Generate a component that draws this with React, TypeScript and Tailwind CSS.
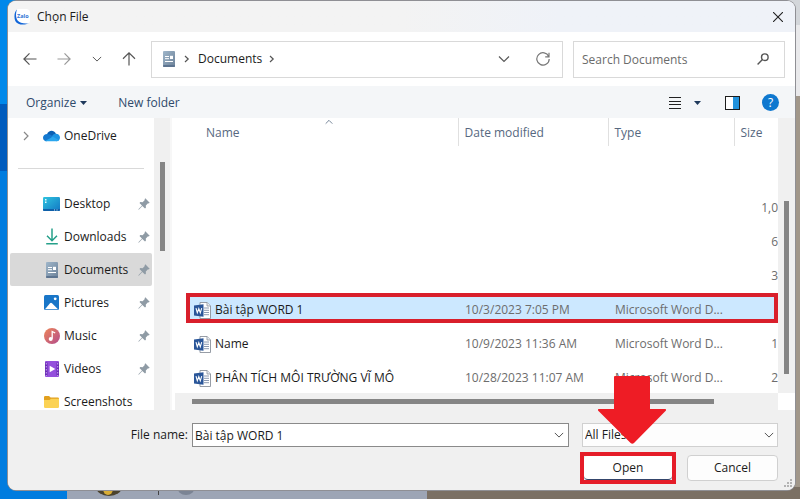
import React, { useState } from "react";

type IconProps = { className?: string };

const Chevron = ({ className = "" }: IconProps) => (
  <svg viewBox="0 0 12 12" className={className} fill="none" stroke="currentColor" strokeWidth="1.2" aria-hidden="true">
    <path d="M1 3.500 6 8.500 11 3.500" />
  </svg>
);

const CrumbArrow = () => (
  <svg viewBox="0 0 6 8" className="h-2 w-1.5" fill="none" stroke="#555" strokeWidth="1.2" aria-hidden="true">
    <path d="M1 1l3.2 3L1 7" />
  </svg>
);

const ZaloIcon = () => (
  <svg viewBox="0 0 16 16" className="size-4" aria-hidden="true">
    <rect x="1" y="0" width="15" height="15" rx="4" fill="#fff" />
    <path d="M3 .6C.4 2.5-.4 8.400 1.400 12.200 3.400 15.800 10 16.600 15 14.200 10 14.800 5.600 14 3.600 11.500 1.600 8.600 1.600 4 3 .6Z" fill="#1266d8" />
    <text x="8.800" y="9" fontSize="5.500" fontWeight="700" textAnchor="middle" fill="#2f74d6" fontFamily="Open Sans, sans-serif">Zalo</text>
  </svg>
);

const DocumentIcon = ({ className = "h-4 w-3" }: IconProps) => (
  <svg viewBox="0 0 12 16" className={className} aria-hidden="true">
    <defs>
      <linearGradient id="docFill" x1="0" y1="0" x2="1" y2="1">
        <stop offset="0" stopColor="#9fb6ca" />
        <stop offset="1" stopColor="#6c8198" />
      </linearGradient>
    </defs>
    <rect width="12" height="16" rx="1" fill="url(#docFill)" />
    <rect y="14" width="12" height="2" rx="1" fill="#5d7490" />
    <path d="M2 5.500h4M2 7.700h4M2 10.500h8" stroke="#fff" strokeWidth="1" />
    <rect x="7" y="4.800" width="3" height="3.200" fill="#fff" />
  </svg>
);

const OneDriveIcon = () => (
  <svg viewBox="0 0 17 12" className="h-3 w-[17px]" aria-hidden="true">
    <path d="M4 4.200C5 1.200 8.500-.2 11 1.500c1 .6 1.500 1.400 1.900 2.300L9 7Z" fill="#0a5fb4" />
    <path d="M4.500 3.900C2 3.800 0 5.400 0 7.700 0 9.900 1.700 11.300 3.500 11.300L11.500 7.200 7 4.600C6.200 4.100 5.400 3.900 4.500 3.900Z" fill="#1479d0" />
    <path d="M12.700 3.700C15 3.500 17 5.300 17 7.500 17 9.700 15.500 11.300 13.500 11.300L8 7.800 10 4.700C10.800 4 11.700 3.700 12.700 3.700Z" fill="#1c93e3" />
    <path d="M3.500 11.300h10c1 0 1.800-.3 2.500-1L10 6.800 2 10.900c.4.300 1 .4 1.500.4Z" fill="#2aa6ee" />
  </svg>
);

const DesktopIcon = () => (
  <svg viewBox="0 0 17 14" className="h-3.5 w-[17px]" aria-hidden="true">
    <defs>
      <linearGradient id="deskFill" x1="0" y1="0" x2="1" y2="1">
        <stop offset="0" stopColor="#2fc4df" />
        <stop offset="1" stopColor="#1277c4" />
      </linearGradient>
    </defs>
    <rect width="17" height="14" rx="1.300" fill="url(#deskFill)" />
    <path d="M0 12h17v.7A1.300 1.300 0 0 1 15.700 14H1.300A1.300 1.300 0 0 1 0 12.700Z" fill="#0f5fa8" />
    <path d="M2 2h1.500v1.500H2zM2 4.500h1.500V6H2z" fill="#e5fbff" />
    <path d="M11 12.500h1v1h-1zM13.500 12.500h1v1h-1z" fill="#cfeeff" />
  </svg>
);

const DownloadIcon = () => (
  <svg viewBox="0 0 14 17" className="h-[17px] w-3.5" fill="none" stroke="#26a08a" strokeWidth="1.500" aria-hidden="true">
    <path d="M7 .5v12M2 7.800l5 5 5-5M1.200 15.700h11.600" />
  </svg>
);

const PictureIcon = () => (
  <svg viewBox="0 0 15 15" className="size-[15px]" aria-hidden="true">
    <rect width="15" height="15" rx="1.500" fill="#1976c8" />
    <path d="M1 14.300 6 8.200q1-1 2 0l6 6.100Z" fill="#fff" />
    <circle cx="11.200" cy="3.800" r="1.400" fill="#fff" />
  </svg>
);

const MusicIcon = () => (
  <svg viewBox="0 0 16 16" className="size-4" aria-hidden="true">
    <defs>
      <linearGradient id="musicFill" x1="0" y1="0" x2="1" y2="1">
        <stop offset="0" stopColor="#ee8658" />
        <stop offset="1" stopColor="#b34c8c" />
      </linearGradient>
    </defs>
    <circle cx="8" cy="8" r="8" fill="url(#musicFill)" />
    <path d="M8.200 10.800V3.500l3 1.500" fill="none" stroke="#fff" strokeWidth="1.300" />
    <circle cx="6.700" cy="10.900" r="2" fill="#fff" />
  </svg>
);

const VideoIcon = () => (
  <svg viewBox="0 0 14 16" className="h-4 w-3.5" aria-hidden="true">
    <rect width="14" height="16" rx="1" fill="#9450dc" />
    <path d="M0 1.500h2.500v13H0zM11.500 1.500H14v13h-2.500z" fill="#6a2db4" />
    <path d="M1.300 2v13M12.700 2v13" stroke="#c9a2ef" strokeWidth="1" strokeDasharray="1.500 1.500" />
    <path d="M4.700 4.700v6.600L10.300 8Z" fill="#fff" />
  </svg>
);

const FolderIcon = () => (
  <svg viewBox="0 0 15 12" className="h-3 w-[15px]" aria-hidden="true">
    <path d="M0 1.200Q0 0 1.200 0H5l1.600 1.600h7.200Q15 1.600 15 2.800V10H0Z" fill="#e2a01e" />
    <path d="M0 4h5.500L7 2.800h8v8Q15 12 13.800 12H1.200Q0 12 0 10.800Z" fill="#fbd254" />
  </svg>
);

const PinIcon = () => (
  <svg viewBox="0 0 12 12" className="size-3" aria-hidden="true">
    <path d="M7.300.3 11.700 4.700 10.600 5.400 10 5.200 7.800 7.500 7.900 9.800 7 10.500 4.300 8 1 11.400.3 11.800.6 11 4 7.600 1.500 5 2.300 4.100 4.600 4.200 6.800 2 6.600 1.300Z" fill="#8f9ba5" />
  </svg>
);

const WordIcon = () => (
  <svg viewBox="0 0 17 17" className="size-[17px] shrink-0" aria-hidden="true">
    <path d="M6 .5h7.200L16.500 4v12.500H6Z" fill="#fff" stroke="#8b929c" strokeWidth=".9" />
    <path d="M13 .5V4h3.500" fill="#e9edf3" stroke="#8b929c" strokeWidth=".8" />
    <path d="M10 6h5M10 8.300h5M10 10.500h5M10 12.700h5" stroke="#7f8fa8" strokeWidth=".9" />
    <path d="M0 3.500 9.500 2.200v12.600L0 13.500Z" fill="#2a5699" />
    <path d="M2 6.200 3.300 10.800 4.800 6.700 6.300 10.800 7.700 6.200" fill="none" stroke="#fff" strokeWidth="1.100" />
  </svg>
);

const Backdrop = () => (
  <div aria-hidden="true" className="absolute inset-0 -z-10 flex flex-col">
    <div className="flex grow">
      <div className="flex w-1/2 flex-col">
        <div className="h-[104px] bg-[#0088ea]" />
        <div className="h-[67px] bg-[#005bbd]" />
        <div className="grow bg-[#007cdf]" />
      </div>
      <div className="flex w-1/2 flex-col">
        <div className="h-[25px] bg-[#d3d6da]" />
        <div className="h-[71px] bg-[#e9e9eb]" />
        <div className="grow bg-[#a1978a]" />
      </div>
    </div>
    <div className="flex h-3">
      <div className="w-[67px] bg-[#007cdf]" />
      <div className="w-[360px] bg-[#9da5b5]">
        <svg viewBox="0 0 360 12" className="h-3 w-[360px]">
          <ellipse cx="42" cy="0" rx="13" ry="9" fill="#4b432e" />
          <ellipse cx="41" cy="2" rx="5" ry="6" fill="#d9ad35" />
          <path d="M91 4h1v4h-1z" fill="#444" />
          <ellipse cx="119" cy="0" rx="9" ry="8" fill="#7b8494" />
        </svg>
      </div>
      <div className="grow bg-[#7b7064]" />
    </div>
  </div>
);

const TitleBar = () => (
  <header className="flex h-[31px] shrink-0 items-center gap-[7px] bg-linear-to-r from-[#f3f3f3] from-50% to-[#eff2f8] to-70% pl-1.5 pr-3">
    <ZaloIcon />
    <h1 className="grow text-[#1b1b1b]">Chọn File</h1>
    <button type="button" aria-label="Close">
      <svg viewBox="0 0 10 10" className="size-2.5" stroke="#222" strokeWidth="1.100" aria-hidden="true">
        <path d="M0 0l10 10M10 0 0 10" />
      </svg>
    </button>
  </header>
);

const NavigationBar = () => (
  <nav aria-label="Location" className="flex h-[54px] shrink-0 items-center pl-[15px] pr-2.5 text-[#5a5a5a]">
    <div className="flex w-32 shrink-0 items-center justify-between pr-[15px]">
      <button type="button" aria-label="Back">
        <svg viewBox="0 0 14 14" className="size-3.5" fill="none" stroke="#555" strokeWidth="1.200" aria-hidden="true">
          <path d="M13.500 7H1M6.500 1.300.9 7l5.600 5.700" />
        </svg>
      </button>
      <button type="button" aria-label="Forward">
        <svg viewBox="0 0 14 14" className="size-3.5" fill="none" stroke="#999" strokeWidth="1.200" aria-hidden="true">
          <path d="M.5 7H13M7.500 1.300 13.100 7l-5.600 5.700" />
        </svg>
      </button>
      <button type="button" aria-label="Recent locations">
        <Chevron className="size-2.5" />
      </button>
      <button type="button" aria-label="Up">
        <svg viewBox="0 0 14 14" className="size-3.5" fill="none" stroke="#555" strokeWidth="1.200" aria-hidden="true">
          <path d="M7 13.500V1M1 6.700 7 .9l6 5.800" />
        </svg>
      </button>
    </div>
    <div className="flex h-[37px] grow items-center border border-[#d9d9d9] pl-[11px] pr-3">
      <DocumentIcon />
      <span className="flex w-[23px] justify-center">
        <CrumbArrow />
      </span>
      <button type="button" className="text-[#1b1b1b]">Documents</button>
      <span className="flex w-5 justify-center">
        <CrumbArrow />
      </span>
      <button type="button" aria-label="Previous locations" className="ml-auto">
        <Chevron className="size-3" />
      </button>
      <button type="button" aria-label="Refresh" className="ml-[26px]">
        <svg viewBox="0 0 14 14" className="size-3.5" fill="none" stroke="#777" strokeWidth="1.200" aria-hidden="true">
          <path d="M12.700 4.500A6.200 6.200 0 1 0 13.200 7M13 .8v4H9.200" />
        </svg>
      </button>
    </div>
    <div className="ml-2.5 flex h-[37px] w-[212px] shrink-0 items-center border border-[#d9d9d9] pl-2 pr-[15px]">
      <input
        type="search"
        aria-label="Search Documents"
        placeholder="Search Documents"
        className="h-6 w-0 grow outline-none placeholder:text-[#6b6b6b]"
      />
      <svg viewBox="0 0 12 12" className="size-3" fill="none" stroke="#555" strokeWidth="1.400" aria-hidden="true">
        <circle cx="7.800" cy="4.200" r="3.300" />
        <path d="M5.400 6.600.6 11.400" />
      </svg>
    </div>
  </nav>
);

const Toolbar = () => (
  <div className="flex h-8 shrink-0 items-center bg-[#f4f6f8] pl-[18px] pr-4 pt-px text-[#2f4a6b]">
    <button type="button" className="flex items-center gap-1">
      Organize
      <svg viewBox="0 0 7 4" className="h-1 w-[7px]" fill="#1f3a5c" aria-hidden="true"><path d="M0 0h7L3.500 4Z" /></svg>
    </button>
    <button type="button" className="ml-[31px]">New folder</button>
    <div className="ml-auto flex items-center">
      <button type="button" aria-label="View" className="flex items-center gap-[13px]">
        <svg viewBox="0 0 12 12" className="size-3" stroke="#222" strokeWidth="1" aria-hidden="true">
          <path d="M0 .5h12M0 4.500h12M0 7.500h12M0 11.500h12" />
        </svg>
        <svg viewBox="0 0 7 4" className="h-1 w-[7px]" fill="#1f3a5c" aria-hidden="true"><path d="M0 0h7L3.500 4Z" /></svg>
      </button>
      <button type="button" aria-label="Preview pane" className="ml-6">
        <svg viewBox="0 0 15 14" className="h-3.5 w-[15px]" aria-hidden="true">
          <rect x=".5" y=".5" width="14" height="13" fill="#fff" stroke="#1d1d1d" />
          <rect x="8" y="1" width="6" height="12" fill="#2292dc" />
        </svg>
      </button>
      <button type="button" aria-label="Help" className="ml-[22px] flex size-[17px] items-center justify-center rounded-full bg-[#0f78cf] text-white">
        ?
      </button>
    </div>
  </div>
);

const places: { name: string; icon: React.ReactNode; pinned: boolean }[] = [
  { name: "Desktop", icon: <DesktopIcon />, pinned: true },
  { name: "Downloads", icon: <DownloadIcon />, pinned: true },
  { name: "Documents", icon: <DocumentIcon />, pinned: true },
  { name: "Pictures", icon: <PictureIcon />, pinned: true },
  { name: "Music", icon: <MusicIcon />, pinned: true },
  { name: "Videos", icon: <VideoIcon />, pinned: true },
  { name: "Screenshots", icon: <FolderIcon />, pinned: false },
];

const Sidebar = () => (
  <aside className="flex w-[164px] shrink-0 overflow-hidden border-r-2 border-[#f7f7f7]">
    <div className="flex w-[146px] shrink-0 flex-col px-0.5">
      <button type="button" className="flex h-9 shrink-0 items-center pl-[13px] text-[#1b1b1b]">
        <svg viewBox="0 0 6 10" className="mr-3.5 h-2.5 w-1.5" fill="none" stroke="#888" strokeWidth="1.200" aria-hidden="true">
          <path d="M1 1l4 4-4 4" />
        </svg>
        <OneDriveIcon />
        <span className="ml-1">OneDrive</span>
      </button>
      <hr className="mb-[18px] ml-2 mr-2 mt-3.5 border-[#d9d9d9]" />
      <ul>
        {places.map((p) => (
          <li key={p.name}>
            <button
              type="button"
              className={`flex h-[33px] w-full items-center rounded-xs pl-[33px] pr-0.5 text-[#1b1b1b] ${p.name === "Documents" ? "bg-[#d9d9d9]" : ""}`}
            >
              <span className="flex w-[17px] justify-center">{p.icon}</span>
              <span className="ml-1 grow text-left">{p.name}</span>
              {p.pinned && <PinIcon />}
            </button>
          </li>
        ))}
      </ul>
    </div>
    <div className="w-4 shrink-0 bg-[#f0f0f0] pl-1.5 pt-11">
      <div className="h-[89px] w-[5px] bg-[#858585]" />
    </div>
  </aside>
);

type FileRow = { name?: string; date?: string; type?: string; size: string };

const files: FileRow[] = [
  { size: "1,0" },
  { size: "6" },
  { size: "3" },
  { name: "Bài tập WORD 1", date: "10/3/2023 7:05 PM", type: "Microsoft Word D...", size: "" },
  { name: "Name", date: "10/9/2023 11:36 AM", type: "Microsoft Word D...", size: "1" },
  { name: "PHÂN TÍCH MÔI TRƯỜNG VĨ MÔ", date: "10/28/2023 11:07 AM", type: "Microsoft Word D...", size: "2" },
];

const FileList = () => (
  <section aria-label="Files" className="flex min-w-0 grow flex-col">
    <div className="flex min-h-0 grow">
      <div className="min-w-0 grow overflow-hidden pl-3.5">
        <table className="w-full table-fixed border-collapse">
          <colgroup>
            <col />
            <col className="w-[150px]" />
            <col className="w-[126px]" />
            <col className="w-11" />
          </colgroup>
          <thead>
            <tr className="h-7 text-left text-[#566880]">
              <th className="relative p-0 pl-5 pt-px font-normal">
                Name
                <Chevron className="absolute inset-x-0 left-3.5 top-0 mx-auto size-2 rotate-180" />
              </th>
              <th className="border-l border-[#e0e0e0] p-0 pl-1.5 pt-px font-normal">Date modified</th>
              <th className="border-l border-[#e0e0e0] p-0 pl-1.5 pt-px font-normal">Type</th>
              <th className="border-l border-[#e0e0e0] p-0 pl-1.5 pt-px font-normal">Size</th>
            </tr>
            <tr aria-hidden="true" className="h-[45px]"><td colSpan={4} /></tr>
          </thead>
          <tbody>
            {files.map((f, i) => (
              <tr key={i} aria-selected={i === 3} className="relative isolate h-[34px] text-[#6d6d6d]">
                <td className="p-0 pl-2 text-[#1b1b1b]">
                  {i === 3 && <span className="absolute inset-x-0 top-0 -z-10 h-[30px] border-4 border-[#d91f2b] bg-[#cce8ff]" />}
                  {f.name && (
                    <span className="flex items-center gap-1 whitespace-nowrap">
                      <WordIcon />
                      {f.name}
                    </span>
                  )}
                </td>
                <td className="whitespace-nowrap p-0 pl-[7px]">{f.date}</td>
                <td className="whitespace-nowrap p-0 pl-[7px]">{f.type}</td>
                <td className="p-0 text-right">{f.size}</td>
              </tr>
            ))}
          </tbody>
        </table>
      </div>
      <div className="w-[17px] shrink-0 bg-[#f0f0f0] pl-1.5 pt-[83px]">
        <div className="h-[173px] w-[5px] bg-[#858585]" />
      </div>
    </div>
    <div className="flex h-[17px] shrink-0">
      <div className="ml-[3px] grow bg-[#f0f0f0] pl-[17px] pr-16 pt-1.5">
        <div className="h-[5px] bg-[#858585]" />
      </div>
      <div className="w-[17px] bg-white" />
    </div>
  </section>
);

const Footer = () => {
  const [fileName, setFileName] = useState("Bài tập WORD 1");
  return (
    <footer className="relative flex h-20 shrink-0 flex-col bg-[#f0f0f0] pr-[17px] pt-[13px] text-[#1b1b1b]">
      <div className="flex h-6 items-center">
        <label htmlFor="file-name" className="w-[184px] shrink-0 pr-1 text-right">File name:</label>
        <div className="flex h-6 grow items-center border border-[#8a8a8a] bg-white pl-0.5 pr-1">
          <input id="file-name" value={fileName} onChange={(e) => setFileName(e.target.value)} className="h-5 w-0 grow outline-none" />
          <Chevron className="size-2.5 text-[#555]" />
        </div>
        <div className="relative ml-[13px] w-[196px] shrink-0">
          <select aria-label="File type" className="h-6 w-full appearance-none border border-[#d0d0d0] bg-[#fdfdfd] pl-0.5 outline-none">
            <option>All Files</option>
          </select>
          <Chevron className="pointer-events-none absolute right-1 top-[7px] size-2.5 text-[#555]" />
        </div>
      </div>
      <div className="mt-[5px] flex items-center justify-end gap-[11px]">
        <div className="relative h-8 w-24 border-4 border-[#e51c28]">
          <button type="button" className="h-6 w-full rounded-sm border-b border-[#34456b] bg-white">Open</button>
          <svg viewBox="0 0 68 68" className="absolute bottom-9 left-3.5 size-[68px]" fill="#ee1c25" aria-hidden="true">
            <path d="M17 0h34q1 0 1 1v32h15q2 0 .5 2L36 67q-1.700 1.500-3.400 0L.500 35Q-1 33 1 33h15V1q0-1 1-1Z" />
          </svg>
        </div>
        <button type="button" className="h-[26px] w-[91px] rounded-sm border border-[#d0d0d0] bg-[#fdfdfd]">Cancel</button>
      </div>
      <svg viewBox="0 0 10 10" className="absolute bottom-0.5 right-0.5 size-2.5" fill="#b3b3b3" aria-hidden="true">
        <path d="M7 1h2v2H7zM4 4h2v2H4zM7 4h2v2H7zM1 7h2v2H1zM4 7h2v2H4zM7 7h2v2H7z" />
      </svg>
    </footer>
  );
};

export default function App() {
  return (
    <div className="relative isolate flex h-screen flex-col overflow-hidden bg-[#9c9ca2] pb-[9px] pl-2 pr-[5px] pt-px font-['Open_Sans','Noto_Sans',sans-serif] text-[12px] leading-4">
      <Backdrop />
      <main className="flex min-h-0 grow flex-col overflow-hidden rounded-lg bg-white shadow-[0_0_0_1px_#8f8f94]">
        <TitleBar />
        <NavigationBar />
        <Toolbar />
        <div className="flex min-h-0 grow">
          <Sidebar />
          <FileList />
        </div>
        <Footer />
      </main>
    </div>
  );
}
